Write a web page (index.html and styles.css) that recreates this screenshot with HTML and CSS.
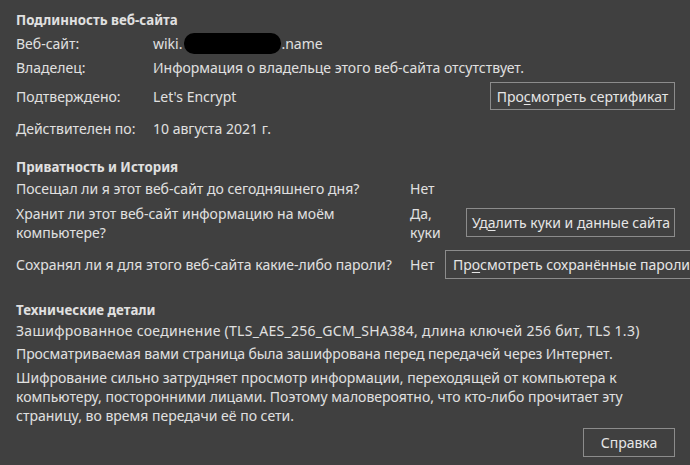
FILE: index.html
```html
<!DOCTYPE html>
<html lang="ru">
<head>
<meta charset="utf-8">
<link rel="stylesheet" href="styles.css">
</head>
<body>
<main class="dialog">
  <section class="identity">
    <h2 class="heading h-identity">Подлинность веб-сайта</h2>
    <div class="row r1"><span class="label">Веб-сайт:</span><span class="value">wiki.<span class="redact"></span>.name</span></div>
    <div class="row r2"><span class="label">Владелец:</span><span class="value">Информация о владельце этого веб-сайта отсутствует.</span></div>
    <div class="row r3"><span class="label">Подтверждено:</span><span class="value grow">Let's Encrypt</span><button class="btn btn-cert">Про<u>с</u>мотреть сертификат</button></div>
    <div class="row r4"><span class="label">Действителен по:</span><span class="value">10 августа 2021 г.</span></div>
  </section>
  <section class="privacy">
    <h2 class="heading h-privacy">Приватность и История</h2>
    <div class="prow p1"><span class="q">Посещал ли я этот веб-сайт до сегодняшнего дня?</span><span class="v">Нет</span></div>
    <div class="prow p2"><span class="q q-wrap">Хранит ли этот веб-сайт информацию на моём компьютере?</span><span class="v v-wide">Да, куки</span><button class="btn btn-cookies">Уд<u>а</u>лить куки и данные сайта</button></div>
    <div class="prow p3"><span class="q">Сохранял ли я для этого веб-сайта какие-либо пароли?</span><span class="v v-narrow">Нет</span><button class="btn btn-pass">Пр<u>о</u>смотреть сохранённые пароли</button></div>
  </section>
  <section class="tech">
    <h2 class="heading h-tech">Технические детали</h2>
    <p class="line l1">Зашифрованное соединение (TLS_AES_256_GCM_SHA384, длина ключей 256 бит, TLS 1.3)</p>
    <p class="line l2">Просматриваемая вами страница была зашифрована перед передачей через Интернет.</p>
    <p class="para">Шифрование сильно затрудняет просмотр информации, переходящей от компьютера к компьютеру, посторонними лицами. Поэтому маловероятно, что кто-либо прочитает эту страницу, во время передачи её по сети.</p>
  </section>
  <footer class="footer"><button class="btn btn-help">Справка</button></footer>
</main>
</body>
</html>
```
FILE: styles.css
```css
html, body {
  margin: 0;
  padding: 0;
  background: #404040;
  overflow: hidden;
}
body {
  width: 690px;
  height: 465px;
  color: #e0e0e0;
  font-family: "Noto Sans", "Open Sans", sans-serif;
  font-size: 14px;
  line-height: 19px;
}
.dialog {
  padding: 10px 0 0 16px;
  display: flex;
  flex-direction: column;
}
.heading {
  margin: 0;
  font-size: 13.3px;
  font-weight: bold;
  height: 20px;
  line-height: 20px;
}
.row {
  display: flex;
  align-items: center;
  height: 24px;
  white-space: nowrap;
}
.r1 { margin-top: 1px; }
.r3 { height: 30px; margin-top: 2px; padding-right: 15px; }
.r4 { margin-top: 5px; }
.label { width: 137px; flex: none; }
.value { flex: none; display: inline-flex; align-items: center; }
.value.grow { flex: 1; }
.redact {
  display: inline-block;
  width: 97px;
  height: 21px;
  background: #000;
  border-radius: 10px;
  margin: 0 0 0 2px;
}
.btn {
  font: inherit;
  color: #e6e6e6;
  background: #404040;
  border: 1px solid #8c8c8c;
  border-radius: 0;
  height: 28px;
  padding: 0 5px;
  flex: none;
  white-space: nowrap;
  margin: 0;
}
.btn u { text-decoration-thickness: 1px; text-underline-offset: 2px; }
.btn-cert { width: 185px; }
.h-privacy { margin-top: 17px; }
.prow { display: flex; align-items: center; padding-right: 15px; }
.q { width: 394px; flex: none; }
.q-wrap { padding-right: 60px; box-sizing: border-box; }
.p1 { margin-top: 1px; height: 20px; }
.p2 { margin-top: 5px; height: 39px; }
.p3 { margin-top: 8px; height: 29px; }
.v { flex: none; }
.v-wide { width: 32px; }
.v-narrow { width: 35px; }
.btn-cookies { width: 209px; height: 29px; margin-left: auto; }
.btn-pass { height: 29px; padding-left: 7px; }
.h-tech { margin-top: 21px; }
.line { margin: 0; white-space: nowrap; height: 21px; line-height: 21px; }
.l1 { letter-spacing: 0.28px; }
.l2 { margin-top: 2px; letter-spacing: -0.1px; }
.para { margin: 4px 0 0; width: 610px; }
.footer {
  display: flex;
  justify-content: flex-end;
  padding-right: 15px;
  margin-top: 3px;
}
.btn-help { width: 92px; height: 29px; }
```
